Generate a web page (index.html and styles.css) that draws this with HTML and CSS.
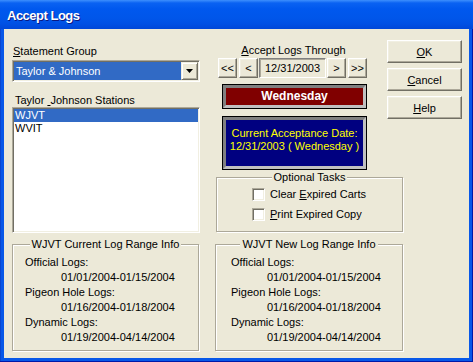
FILE: index.html
```html
<!DOCTYPE html>
<html>
<head>
<meta name="viewport" content="width=device-width, initial-scale=1">
<link rel="stylesheet" href="styles.css">
</head>
<body>
<div class="window">
  <div class="titlebar"><span class="title">Accept Logs</span></div>
  <div class="client">
    <div class="col-left">
      <div class="label first"><u>S</u>tatement Group</div>
      <div class="combo">
        <div class="combo-value">Taylor &amp; Johnson</div>
        <div class="combo-btn">
          <svg width="7" height="4" viewBox="0 0 7 4"><path d="M0 0h7L3.5 4z" fill="#000"/></svg>
        </div>
      </div>
      <div class="label stations">Taylor <u>&nbsp;</u>Johnson Stations</div>
      <div class="listbox">
        <div class="item selected">WJVT</div>
        <div class="item">WVIT</div>
      </div>
      <div class="group range current">
        <div class="group-title">WJVT Current Log Range Info</div>
        <div class="range-body">
          <div class="rl">Official Logs:</div>
          <div class="rd">01/01/2004-01/15/2004</div>
          <div class="rl">Pigeon Hole Logs:</div>
          <div class="rd">01/16/2004-01/18/2004</div>
          <div class="rl">Dynamic Logs:</div>
          <div class="rd">01/19/2004-04/14/2004</div>
        </div>
      </div>
    </div>
    <div class="col-right">
      <div class="top-row">
        <div class="through">
          <div class="through-label"><u>A</u>ccept Logs Through</div>
          <div class="nav">
            <div class="btn nav-btn">&lt;&lt;</div>
            <div class="btn nav-btn step">&lt;</div>
            <div class="date-field">12/31/2003</div>
            <div class="btn nav-btn step">&gt;</div>
            <div class="btn nav-btn">&gt;&gt;</div>
          </div>
          <div class="frame day-frame"><div class="bevel day">Wednesday</div></div>
          <div class="frame acc-frame"><div class="bevel acc">Current Acceptance Date:<br>12/31/2003 ( Wednesday )</div></div>
        </div>
        <div class="actions">
          <div class="btn action"><u>O</u>K</div>
          <div class="btn action"><u>C</u>ancel</div>
          <div class="btn action"><u>H</u>elp</div>
        </div>
      </div>
      <div class="group tasks">
        <div class="group-title">Optional Tasks</div>
        <div class="check-row first-check"><span class="checkbox"></span><span>Clear <u>E</u>xpired Carts</span></div>
        <div class="check-row"><span class="checkbox"></span><span><u>P</u>rint Expired Copy</span></div>
      </div>
      <div class="group range new">
        <div class="group-title">WJVT New Log Range Info</div>
        <div class="range-body">
          <div class="rl">Official Logs:</div>
          <div class="rd">01/01/2004-01/15/2004</div>
          <div class="rl">Pigeon Hole Logs:</div>
          <div class="rd">01/16/2004-01/18/2004</div>
          <div class="rl">Dynamic Logs:</div>
          <div class="rd">01/19/2004-04/14/2004</div>
        </div>
      </div>
    </div>
  </div>
</div>
</body>
</html>
```
FILE: styles.css
```css
body {
  margin: 0;
  background: #0055e5;
}
.window {
  width: 473px;
  height: 362px;
  box-sizing: border-box;
  padding: 0 4px 4px 4px;
  background: #0858e8;
  box-shadow: inset -1px -1px #0019a8, inset 1px 0 #0a46d0;
  font-family: "Liberation Sans", Arial, sans-serif;
  font-size: 11px;
  color: #000;
}
.titlebar {
  height: 29px;
  margin: 0 -4px;
  box-sizing: border-box;
  padding: 8px 0 0 7px;
  background: linear-gradient(to bottom, #3d8ffd 0, #0a62f2 3px, #0058ee 9px, #0056ea 18px, #0050e4 24px, #0047d8 29px);
}
.title {
  color: #fff;
  font-weight: bold;
  font-size: 13px;
  letter-spacing: -0.5px;
  line-height: 16px;
  text-shadow: 1px 1px #0a1883;
}
.client {
  height: 329px;
  box-sizing: border-box;
  background: #ece9d8;
  padding-left: 8px;
  display: grid;
  grid-template-columns: 188px 1fr;
  column-gap: 15px;
}
.col-left {
  display: flex;
  flex-direction: column;
}
.label {
  line-height: 13px;
  white-space: nowrap;
}
.label.first {
  margin-top: 16px;
  padding-left: 1px;
}
.label.stations {
  margin-top: 12px;
  padding-left: 3px;
}

/* sunken fields */
.combo, .listbox, .checkbox {
  border: 1px solid;
  border-color: #aca899 #fff #fff #aca899;
  box-shadow: inset 1px 1px #716f64, inset -1px -1px #f1efe2;
}
.combo {
  margin-top: 2px;
  height: 22px;
  box-sizing: border-box;
  padding: 1px;
  display: flex;
  background: #fff;
}
.combo-value {
  flex: 1;
  background: #316ac5;
  color: #fff;
  line-height: 18px;
  padding-left: 2px;
}
.combo-btn {
  width: 17px;
  box-sizing: border-box;
  border: 1px solid;
  border-color: #f1efe2 #716f64 #716f64 #f1efe2;
  box-shadow: inset 1px 1px #fff, inset -1px -1px #aca899;
  background: #ece9d8;
  display: flex;
  align-items: center;
  justify-content: center;
}
.listbox {
  height: 126px;
  box-sizing: border-box;
  padding: 1px;
  background: #fff;
}
.item {
  line-height: 13px;
  padding-left: 1px;
}
.item.selected {
  background: #316ac5;
  color: #fff;
}

/* group boxes */
.group {
  border: 1px solid #aca899;
  box-shadow: inset 1px 1px #fff, 1px 1px #fff;
  box-sizing: border-box;
}
.group-title {
  display: table;
  margin: -7px auto 0;
  padding: 0 2px;
  background: #ece9d8;
  line-height: 13px;
  white-space: nowrap;
}
.range {
  height: 107px;
}
.col-left .range {
  margin-top: 11px;
  width: 187px;
}
.range-body {
  margin-top: 4px;
  line-height: 15px;
  white-space: nowrap;
}
.current .rl { padding-left: 12px; }
.current .rd { padding-left: 48px; }
.new .rl { padding-left: 15px; }
.new .rd { padding-left: 51px; }

.col-right {
  display: flex;
  flex-direction: column;
}
.top-row {
  display: flex;
  margin-top: 11px;
}
.through {
  margin-left: 3px;
  width: 149px;
  display: flex;
  flex-direction: column;
}
.through-label {
  margin-top: 4px;
  line-height: 13px;
  text-align: center;
  padding-left: 2px;
}
.nav {
  margin-top: 1px;
  height: 20px;
  display: flex;
  gap: 2px;
}

/* raised buttons */
.btn {
  border: 1px solid;
  border-color: #fff #716f64 #716f64 #fff;
  box-shadow: inset -1px -1px #aca899, inset 1px 1px #f1efe2;
  background: #ece9d8;
  box-sizing: border-box;
  display: flex;
  align-items: center;
  justify-content: center;
}
.nav-btn {
  width: 19px;
  padding-bottom: 1px;
}
.date-field {
  width: 67px;
  margin: 0 -1px;
  box-sizing: border-box;
  border: 1px solid;
  border-color: #808080 #fff #fff #808080;
  box-shadow: inset 1px 1px #aca899;
  line-height: 18px;
  text-align: center;
}
.frame {
  margin-left: 4px;
  width: 145px;
  box-sizing: border-box;
  border: 1px solid #000;
  display: flex;
}
.bevel {
  flex: 1;
  border: 3px solid;
  border-color: #808080 #c0c0c0 #c0c0c0 #808080;
}
.day-frame {
  margin-top: 6px;
  height: 25px;
}
.day {
  background: #800000;
  color: #fff;
  font-weight: bold;
  font-size: 12px;
  line-height: 17px;
  text-align: center;
}
.acc-frame {
  margin-top: 7px;
  height: 54px;
}
.acc {
  background: #000080;
  color: #ffff00;
  line-height: 13px;
  padding-top: 7px;
  text-align: center;
  white-space: nowrap;
}
.actions {
  margin-left: 20px;
  display: flex;
  flex-direction: column;
  gap: 5px;
}
.action {
  width: 75px;
  height: 23px;
}
.tasks {
  margin-top: 7px;
  margin-left: 1px;
  width: 187px;
  height: 55px;
}
.check-row {
  display: flex;
  align-items: center;
  gap: 5px;
  padding-left: 35px;
  height: 13px;
  margin-top: 7px;
  line-height: 13px;
}
.check-row.first-check {
  margin-top: 4px;
}
.checkbox {
  width: 13px;
  height: 13px;
  box-sizing: border-box;
  background: #fff;
}
.new {
  margin-top: 12px;
  width: 188px;
}
```
